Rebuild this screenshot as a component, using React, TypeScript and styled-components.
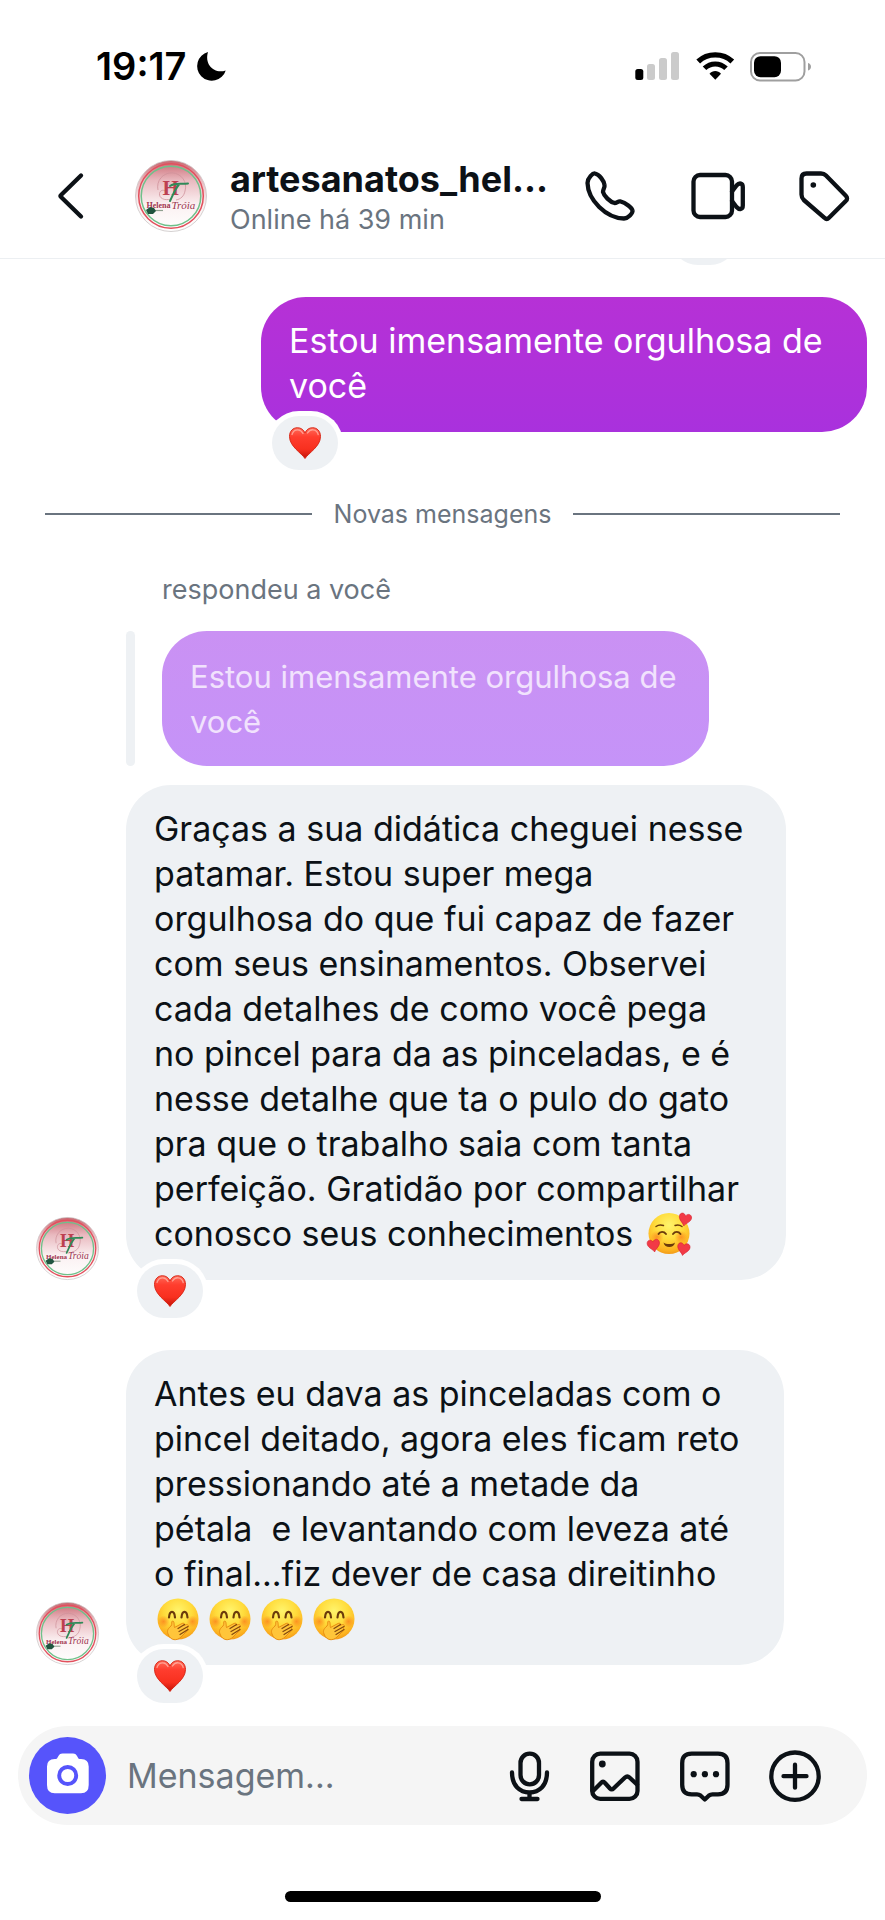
import React, { useId } from 'react';
import styled, { createGlobalStyle } from 'styled-components';

const ink = '#0c1116';
const muted = '#6a747f';
const grey = '#eef1f4';

const GlobalStyle = createGlobalStyle`
  *, *::before, *::after { box-sizing: border-box; }
  body {
    margin: 0;
    background: #fff;
    color: ${ink};
    font-family: Inter, "Liberation Sans", sans-serif;
  }
  svg { display: block; flex: none; overflow: visible; }
`;

const Page = styled.div`
  min-height: 100vh;
  display: flex;
  flex-direction: column;
`;

const StatusBar = styled.div`
  display: flex;
  align-items: center;
  justify-content: space-between;
  height: 134px;
  padding: 0 73px 2px 96px;
  color: #000;
`;

const Clock = styled.div`
  display: flex;
  align-items: center;
  gap: 11px;
  font-size: 38px;
  font-weight: 600;
  line-height: 46px;
`;

const StatusIcons = styled.div`
  display: flex;
  align-items: center;
  gap: 15px;
`;

const Header = styled.header`
  display: flex;
  align-items: center;
  height: 125px;
  padding: 0 34px 0 48px;
  border-bottom: 1px solid #eceff2;
`;

const IconButton = styled.button<{ $narrow?: boolean }>`
  display: flex;
  align-items: center;
  justify-content: center;
  width: ${(p) => (p.$narrow ? 46 : 54)}px;
  height: 54px;
  padding: 0;
  border: 0;
  background: none;
  color: ${ink};
  cursor: pointer;
`;

const Profile = styled.a`
  display: flex;
  flex: 1;
  min-width: 0;
  align-items: center;
  gap: 23px;
  margin-left: 33px;
  color: inherit;
  text-decoration: none;
`;

const Identity = styled.div`
  display: flex;
  flex-direction: column;
  min-width: 0;
  padding-top: 2px;
`;

const Name = styled.h1`
  margin: 0;
  font-size: 36px;
  font-weight: 700;
  line-height: 45px;
  white-space: nowrap;
`;

const Presence = styled.span`
  color: ${muted};
  font-size: 27px;
  line-height: 36px;
`;

const HeaderActions = styled.div`
  display: flex;
  gap: 53px;
`;

const Thread = styled.main`
  flex: 1;
  display: flex;
  flex-direction: column;
  overflow: hidden;
  padding: 0 18px 0 36px;
`;

const Pill = styled.span`
  display: flex;
  align-items: center;
  justify-content: center;
  width: 66px;
  height: 54px;
  border-radius: 27px;
  background: ${grey};
`;

const EarlierReaction = styled(Pill)`
  align-self: flex-end;
  margin: -48px 130px 32px 0;
`;

const ReactionAnchor = styled.div`
  position: absolute;
  left: 6px;
  bottom: -43px;
  padding: 5px;
  border-radius: 32px;
  background: #fff;
`;

const Bubble = styled.div<{ $width: number }>`
  position: relative;
  width: ${(p) => p.$width}px;
  max-width: 100%;
  padding: 21px 28px 24px;
  border-radius: 45px;
  font-size: 34px;
  line-height: 45px;
  white-space: pre-wrap;
`;

const SentBubble = styled(Bubble)`
  color: #fff;
  background: linear-gradient(#b631d6, #a931dd);
`;

const QuotedBubble = styled(Bubble)`
  padding: 23px 28px 22px;
  font-size: 31px;
  color: #f1e2fd;
  background: linear-gradient(#ca91f3, #c593f8);
`;

const ReceivedBubble = styled(Bubble)`
  padding-right: 38px;
  background: ${grey};
`;

const SentRow = styled.div`
  display: flex;
  justify-content: flex-end;
`;

const ReceivedRow = styled.div`
  display: flex;
  align-items: flex-end;
  gap: 27px;
  padding-right: 40px;

  & + & { margin-top: 70px; }
`;

const NewMessages = styled.div`
  display: flex;
  align-items: center;
  gap: 22px;
  margin: 66px 27px 0 9px;
  color: ${muted};
  font-size: 25px;
  line-height: 32px;

  &::before,
  &::after {
    content: '';
    flex: 1;
    height: 2px;
    background: ${muted};
  }
`;

const ReplyNote = styled.p`
  margin: 44px 0 0 126px;
  color: ${muted};
  font-size: 27px;
  line-height: 32px;
`;

const Quote = styled.div`
  display: flex;
  gap: 27px;
  margin: 25px 0 19px 90px;

  &::before {
    content: '';
    width: 9px;
    border-radius: 5px;
    background: ${grey};
  }
`;

const Emoji = styled.svg`
  display: inline-block;
  width: 52px;
  height: 45px;
  vertical-align: top;
`;

const Composer = styled.form`
  display: flex;
  align-items: center;
  height: 99px;
  margin: 0 18px;
  padding: 0 45px 0 11px;
  border-radius: 50px;
  background: #f5f5f5;
`;

const CameraButton = styled.button`
  width: 77px;
  height: 77px;
  flex: none;
  padding: 0;
  border: 0;
  border-radius: 50%;
  background: #5654fb;
  cursor: pointer;
`;

const MessageInput = styled.input`
  flex: 1;
  min-width: 0;
  margin-left: 21px;
  padding: 0;
  border: 0;
  outline: 0;
  background: none;
  color: ${ink};
  font: 34px/45px Inter, "Liberation Sans", sans-serif;

  &::placeholder { color: ${muted}; opacity: 1; }
`;

const ComposerActions = styled.div`
  display: flex;
  gap: 36px;
`;

const HomeArea = styled.div`
  display: flex;
  justify-content: center;
  padding: 66px 0 18px;
`;

const HomeBar = styled.div`
  width: 316px;
  height: 11px;
  border-radius: 6px;
  background: #000;
`;

function Icon({ width = 54, children }: { width?: number; children: React.ReactNode }) {
  return (
    <svg width={width} height="54" viewBox={`0 0 ${width} 54`} fill="none" stroke="currentColor"
      strokeWidth="4.3" strokeLinecap="round" strokeLinejoin="round" aria-hidden="true">
      {children}
    </svg>
  );
}

function Avatar({ size }: { size: number }) {
  const id = useId();
  return (
    <svg width={size} height={size} viewBox="0 0 72 72" role="img" aria-label="Helena Tróia">
      <defs>
        <linearGradient id={id} x1="0" y1="0" x2="0" y2="1">
          <stop offset="0" stopColor="#c9656f" />
          <stop offset=".28" stopColor="#e9b9bf" />
          <stop offset=".62" stopColor="#fbf1f2" />
          <stop offset="1" stopColor="#fff" />
        </linearGradient>
      </defs>
      <circle cx="36" cy="36" r="35.5" fill={`url(#${id})`} stroke="#c9c4c4" strokeWidth=".8" />
      <circle cx="36" cy="36" r="32.3" fill="none" stroke="#e2505d" strokeWidth="1.5" />
      <circle cx="36" cy="36" r="29.8" fill="none" stroke="#6fc08a" strokeWidth="1.5" />
      <path d="M23 30A14 14 0 1 1 50 31C49 36 46 39 41 40M36 39C29 41 24 38 24.500 33.500C25 30 29 29 31 32" fill="none" stroke="#cf929b" strokeWidth=".8" />
      <text x="27.5" y="34.5" fontFamily="Liberation Serif, serif" fontWeight="700" fontSize="21" fill="#bd3f50">H</text>
      <path d="M35 26C40 22.500 46 24.500 53 23.500M44 24.500C40 29 38 35 35 41" fill="none" stroke="#2f8a58" strokeWidth="2" strokeLinecap="round" />
      <text x="11.5" y="47.5" fontFamily="Liberation Serif, serif" fontWeight="700" fontSize="8" fill="#a23650">Helena</text>
      <text x="36.5" y="48.5" fontFamily="Liberation Serif, serif" fontStyle="italic" fontSize="11" fill="#9c3550">Tróia</text>
      <path d="M19 50.500h9" stroke="#8fa08f" strokeWidth="1.2" />
      <path d="M11 50l4-3 4 1 2 3-3 3-5 0z" fill="#21543f" />
    </svg>
  );
}

function HeartIcon() {
  const id = useId();
  return (
    <svg width="32" height="32" viewBox="0 0 32 32" role="img" aria-label="Coração">
      <defs>
        <linearGradient id={id} x1="0" y1="0" x2="0" y2="1">
          <stop offset="0" stopColor="#ff6a58" />
          <stop offset=".3" stopColor="#ff3d2e" />
          <stop offset=".7" stopColor="#f8301f" />
          <stop offset="1" stopColor="#c21208" />
        </linearGradient>
      </defs>
      <path d="M16 31.500C12.500 26 .5 19.500.5 9.500C.5 4 4 .7 8.500.7C12 .7 14.800 2.800 16 6C17.200 2.800 20 .7 23.500.7C28 .7 31.500 4 31.500 9.500C31.500 19.500 19.500 26 16 31.500Z"
        fill={`url(#${id})`} stroke="#d5200f" strokeWidth=".9" />
      <path d="M3 7.500C4 4 6.500 2.700 9 2.800C11.500 3 13 4.300 14 6.500M18.500 6C20 3.500 22 2.600 24 2.800C26.500 3 28.500 4.500 29.200 7.500" fill="none" stroke="#ffb3a6" strokeWidth="1.3" strokeLinecap="round" opacity=".8" />
    </svg>
  );
}

function FaceFill({ id }: { id: string }) {
  return (
    <defs>
      <radialGradient id={id} cx=".5" cy=".3" r=".75">
        <stop offset="0" stopColor="#fff46c" />
        <stop offset=".45" stopColor="#ffdc3c" />
        <stop offset=".8" stopColor="#fdb421" />
        <stop offset="1" stopColor="#ee9013" />
      </radialGradient>
      <radialGradient id={`${id}c`}>
        <stop offset="0" stopColor="#fb7f1c" stopOpacity=".75" />
        <stop offset="1" stopColor="#fb7f1c" stopOpacity="0" />
      </radialGradient>
    </defs>
  );
}

const tinyHeart = 'M0 7C-1.500 4-6.500 1.500-6-2.500C-5.500-6-1.500-6.500 0-3C2-6.500 6-5.500 6.300-2C6.500 2 1.500 4 0 7Z';

function AdoringFace() {
  const id = useId();
  return (
    <Emoji viewBox="0 0 52 45" role="img" aria-label="🥰">
      <FaceFill id={id} />
      <circle cx="26" cy="22.5" r="20.5" fill={`url(#${id})`} />
      <circle cx="14" cy="26" r="6.5" fill={`url(#${id}c)`} />
      <circle cx="38" cy="26" r="6.5" fill={`url(#${id}c)`} />
      <g fill="none" stroke="#6b3b0b" strokeWidth="1.9" strokeLinecap="round">
        <path d="M15.500 23C17 20.200 21 20.200 23 23M30 23C32 20.200 35.500 20.200 37.500 23" />
        <path d="M13 15.500C15 14 17.500 13.500 20.500 14.500M32 14.500C34.500 13.500 37 14 39 15.500" strokeWidth="1.4" />
      </g>
      <path d="M20.500 31.500C23 33.500 29.500 33.500 32 31.500C31.500 34.500 29 36 26.300 36S21 34.500 20.500 31.500Z" fill="#6b3b0b" />
      <g fill="#f23a46" stroke="#d8222f" strokeWidth=".6">
        <path d={tinyHeart} transform="translate(42 8) rotate(10)" />
        <path d={tinyHeart} transform="translate(10.500 34) rotate(-10)" />
        <path d={tinyHeart} transform="translate(40.500 37.500) rotate(8)" />
      </g>
    </Emoji>
  );
}

function GigglingFace() {
  const id = useId();
  return (
    <Emoji viewBox="0 0 52 45" role="img" aria-label="🤭">
      <FaceFill id={id} />
      <circle cx="24" cy="23" r="20.5" fill={`url(#${id})`} />
      <circle cx="9.5" cy="25.5" r="6" fill={`url(#${id}c)`} />
      <circle cx="38.5" cy="25.5" r="6" fill={`url(#${id}c)`} />
      <path d="M15 21.500C15.500 14 20.500 14 21 21.500M27.500 21.500C28 14 33 14 33.500 21.500" fill="none" stroke="#6b3b0b" strokeWidth="2.2" strokeLinecap="round" />
      <path d="M14 38C12.500 34 14.500 32.500 17 30C18.500 28.500 17 25.500 18.500 25C20.500 24.500 20 30 20.500 31.500L28 27.500C30.500 26.500 31 28.500 29.500 29.500L32.500 28.500C35 28.500 35 31 33 32L33.500 32.500C34.500 34 33.500 35.500 32 36L27 41C23 45 16.500 45 14 38Z" fill="#ffc53a" stroke="#e88d12" strokeWidth="1" />
      <path d="M24 32.500L30.500 28.500M25 35.500L34 30.500M26 38.500L34 33.500" stroke="#83470e" strokeWidth="1.2" strokeLinecap="round" />
    </Emoji>
  );
}

function Reaction() {
  return (
    <ReactionAnchor>
      <Pill><HeartIcon /></Pill>
    </ReactionAnchor>
  );
}

export default function App() {
  return (
    <Page>
      <GlobalStyle />
      <StatusBar>
        <Clock>
          19:17
          <svg width="30" height="30" viewBox="0 0 30 30" aria-hidden="true">
            <path d="M11 1A14.600 14.600 0 1 0 28.700 19.400C18 23.500 7 14 11 1Z" />
          </svg>
        </Clock>
        <StatusIcons>
          <svg width="45" height="30" viewBox="0 0 45 30" aria-hidden="true">
            <rect x=".3" y="18" width="8" height="11" rx="2.5" />
            <g fill="#cbcbcb">
              <rect x="12" y="13" width="8" height="16" rx="2.5" />
              <rect x="24" y="7" width="8" height="22" rx="2.5" />
              <rect x="36" y="1" width="8" height="28" rx="2.5" />
            </g>
          </svg>
          <svg width="40" height="30" viewBox="0 0 40 30" fill="none" stroke="#000" aria-hidden="true">
            <path d="M3.200 10.500C12.500 1.600 28 1.600 37.300 10.500" strokeWidth="5.4" />
            <path d="M9.500 17.300C15.500 11.400 25 11.400 31 17.300" strokeWidth="5" />
            <path d="M14.500 22.700C17.500 19.200 23 19.200 26 22.700L20.300 28.800Z" fill="#000" stroke="none" />
          </svg>
          <svg width="62" height="31" viewBox="0 0 62 31" aria-hidden="true">
            <rect x="1" y="2" width="53.5" height="27.5" rx="9" fill="none" stroke="#9f9f9f" strokeWidth="2" />
            <rect x="4" y="5.2" width="27" height="21" rx="6.5" />
            <path d="M58 12C62 13 62 18.500 58 19.500Z" fill="#9f9f9f" />
          </svg>
        </StatusIcons>
      </StatusBar>

      <Header>
        <IconButton type="button" aria-label="Voltar">
          <Icon><path d="M33 6.500L12.800 26.300Q12 27 12.800 27.700L33 47.500" /></Icon>
        </IconButton>
        <Profile href="#perfil">
          <Avatar size={72} />
          <Identity>
            <Name>artesanatos_hel...</Name>
            <Presence>Online há 39 min</Presence>
          </Identity>
        </Profile>
        <HeaderActions>
          <IconButton type="button" aria-label="Ligar">
            <Icon>
              <path d="M12 4.500C10 4 4.500 9 4.500 14C5 31 23 49 41 49.500C45 49.500 50 44 49.500 41.500C49 38.500 43 34 37 32.300C35 32 34 34 31.500 34C27 33 21 27 20 23C20 20 22 18.500 21.500 16C21 12 16.500 5.500 12 4.500Z" />
            </Icon>
          </IconButton>
          <IconButton type="button" aria-label="Chamada de vídeo">
            <Icon>
              <rect x="3.5" y="6" width="38.5" height="42" rx="6.5" />
              <path d="M42 22.500L46.500 16.500C49.500 13.200 52.800 14.200 52.800 18V36.500C52.800 40.300 49.500 41.300 46.500 38L42 32" />
            </Icon>
          </IconButton>
          <IconButton type="button" aria-label="Etiqueta">
            <Icon>
              <path d="M9.500 4.500H24C26 4.500 27.500 5 29 6.500L48.800 26.800C50.500 28.500 50.500 30.500 48.800 32L32 48.800C30.500 50.300 29 50.300 27.500 48.800L6.800 31Q4.500 28.800 4.500 25.500V9.500Q4.500 4.500 9.500 4.500Z" />
              <circle cx="16.3" cy="16" r="2.8" fill="currentColor" stroke="none" />
            </Icon>
          </IconButton>
        </HeaderActions>
      </Header>

      <Thread>
        <EarlierReaction />
        <SentRow>
          <SentBubble $width={606}>
            Estou imensamente orgulhosa de você
            <Reaction />
          </SentBubble>
        </SentRow>

        <NewMessages>Novas mensagens</NewMessages>

        <ReplyNote>respondeu a você</ReplyNote>
        <Quote>
          <QuotedBubble $width={547}>Estou imensamente orgulhosa de você</QuotedBubble>
        </Quote>

        <ReceivedRow>
          <Avatar size={63} />
          <ReceivedBubble $width={660}>
            Graças a sua didática cheguei nesse patamar. Estou super mega orgulhosa do que fui capaz de fazer com seus ensinamentos. Observei cada detalhes de como você pega no pincel para da as pinceladas, e é nesse detalhe que ta o pulo do gato pra que o trabalho saia com tanta perfeição. Gratidão por compartilhar conosco seus conhecimentos <AdoringFace />
            <Reaction />
          </ReceivedBubble>
        </ReceivedRow>
        <ReceivedRow>
          <Avatar size={63} />
          <ReceivedBubble $width={658}>
            {'Antes eu dava as pinceladas com o pincel deitado, agora eles ficam reto pressionando até a metade da pétala\u00a0 e levantando com leveza até o final...fiz dever de casa direitinho '}
            <GigglingFace /><GigglingFace /><GigglingFace /><GigglingFace />
            <Reaction />
          </ReceivedBubble>
        </ReceivedRow>
      </Thread>

      <Composer onSubmit={(e) => e.preventDefault()}>
        <CameraButton type="button" aria-label="Câmera">
          <svg width="77" height="77" viewBox="0 0 77 77" aria-hidden="true">
            <path d="M27 22C29 22 29 16.500 33.500 16.500H44C48.500 16.500 48.500 22 50.500 22H52Q59.700 22 59.700 29.500V48Q59.700 56.300 52 56.300H25.700Q18 56.300 18 48V29.500Q18 22 25.700 22Z" fill="#fff" />
            <circle cx="38.7" cy="38.5" r="8.5" fill="none" stroke="#5654fb" strokeWidth="3.9" />
          </svg>
        </CameraButton>
        <MessageInput type="text" placeholder="Mensagem..." aria-label="Mensagem" />
        <ComposerActions>
          <IconButton type="button" $narrow aria-label="Gravar áudio">
            <Icon width={46}>
              <rect x="14.5" y="4.7" width="18.5" height="30.6" rx="9.2" />
              <path d="M6 23.500C6 37 14 43.500 23.500 43.500S41 37 41 23.500M23.500 43.500V50M15.500 50H31.500" />
            </Icon>
          </IconButton>
          <IconButton type="button" aria-label="Enviar imagem">
            <Icon>
              <rect x="4.2" y="4.7" width="45.3" height="45.2" rx="8" />
              <path d="M5 42L13 34Q15 31.500 17 34L22 39.500Q23.700 41.300 25.500 39.500L37 28.500Q39.300 26.300 41.500 28.500L49 35.500" />
              <circle cx="14.3" cy="15" r="3.4" fill="currentColor" stroke="none" />
            </Icon>
          </IconButton>
          <IconButton type="button" aria-label="Respostas salvas">
            <Icon>
              <path d="M13.700 4.700H40Q49.500 4.700 49.500 14.200V35.800Q49.500 45.300 40 45.300H34.500Q32.500 45.300 31 46.500L26.800 50.500L22.500 46.500Q21 45.300 19 45.300H13.700Q4.200 45.300 4.200 35.800V14.200Q4.200 4.700 13.700 4.700Z" />
              <g fill="currentColor" stroke="none">
                <circle cx="15.7" cy="25.2" r="3.1" />
                <circle cx="26.9" cy="25.2" r="3.1" />
                <circle cx="38" cy="25.2" r="3.1" />
              </g>
            </Icon>
          </IconButton>
          <IconButton type="button" aria-label="Mais opções">
            <Icon>
              <circle cx="27" cy="27.2" r="23.7" />
              <path d="M15.500 27.200H38.500M27 15.700V38.700" />
            </Icon>
          </IconButton>
        </ComposerActions>
      </Composer>

      <HomeArea><HomeBar /></HomeArea>
    </Page>
  );
}
